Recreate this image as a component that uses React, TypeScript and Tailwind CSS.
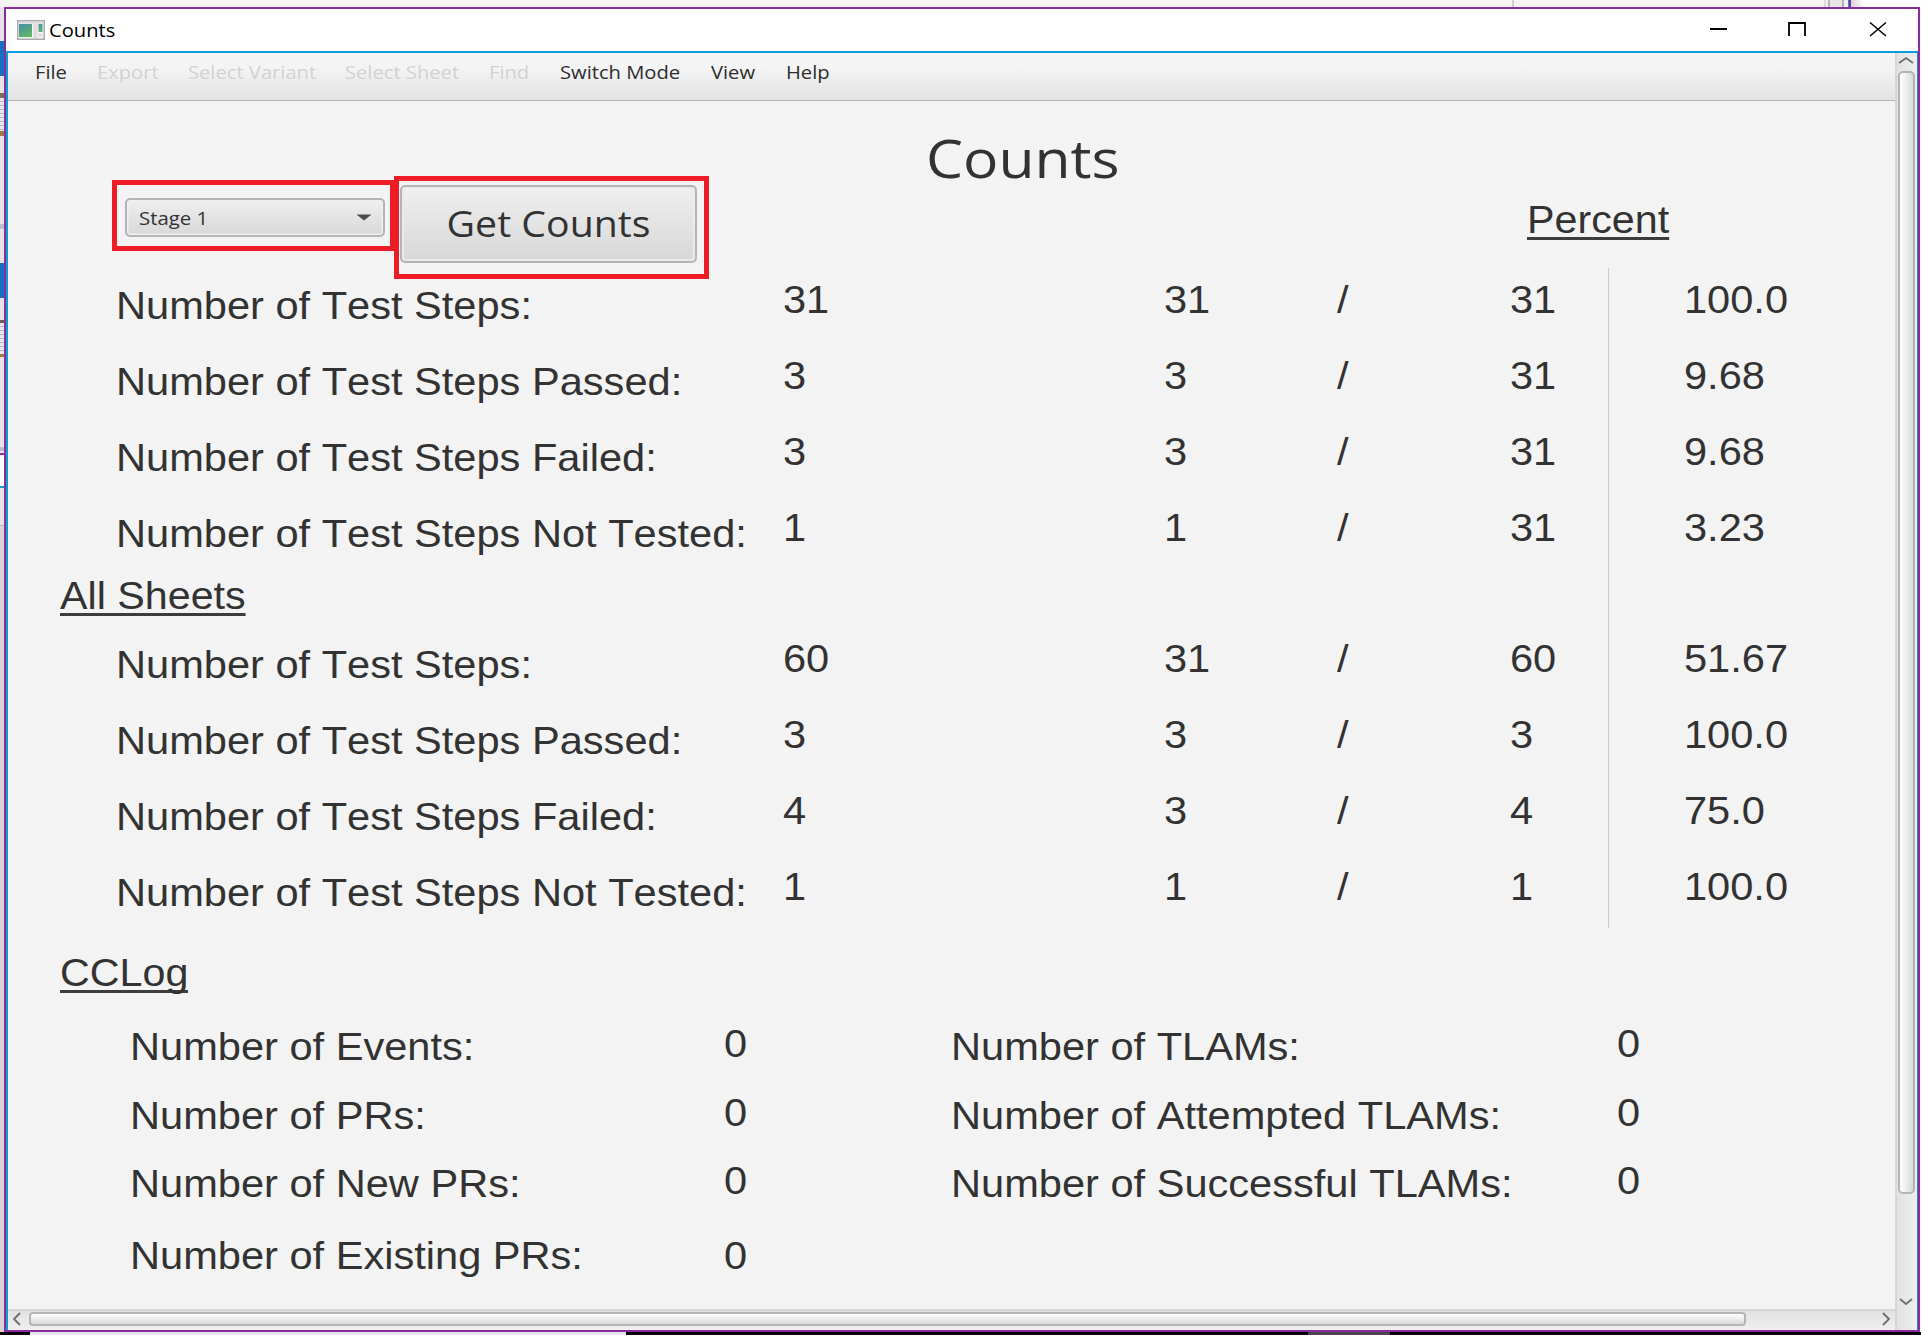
import React from "react";

const TEST_ROWS = [
  ["Number of Test Steps:", "31", "31", "31", "100.0"],
  ["Number of Test Steps Passed:", "3", "3", "31", "9.68"],
  ["Number of Test Steps Failed:", "3", "3", "31", "9.68"],
  ["Number of Test Steps Not Tested:", "1", "1", "31", "3.23"],
];

const ALL_ROWS = [
  ["Number of Test Steps:", "60", "31", "60", "51.67"],
  ["Number of Test Steps Passed:", "3", "3", "3", "100.0"],
  ["Number of Test Steps Failed:", "4", "3", "4", "75.0"],
  ["Number of Test Steps Not Tested:", "1", "1", "1", "100.0"],
];

const LOG_ROWS = [
  ["Number of Events:", "0", "Number of TLAMs:", "0"],
  ["Number of PRs:", "0", "Number of Attempted TLAMs:", "0"],
  ["Number of New PRs:", "0", "Number of Successful TLAMs:", "0"],
];

const MENU = [
  { label: "File", width: "w-[62px]", on: true },
  { label: "Export", width: "w-[91px]", on: false },
  { label: "Select Variant", width: "w-[157px]", on: false },
  { label: "Select Sheet", width: "w-[144px]", on: false },
  { label: "Find", width: "w-[71px]", on: false },
  { label: "Switch Mode", width: "w-[151px]", on: true },
  { label: "View", width: "w-[75px]", on: true },
  { label: "Help", width: "w-[60px]", on: true },
];

function Label({ children, className = "" }: { children: React.ReactNode; className?: string }) {
  return (
    <span
      className={`block h-[44px] origin-left scale-x-[1.08] whitespace-nowrap font-['Liberation_Sans',sans-serif] text-[38.5px] leading-[44px] [font-kerning:none] ${className}`}
    >
      {children}
    </span>
  );
}

function Heading({ children }: { children: React.ReactNode }) {
  return (
    <div className="h-[40px] w-fit origin-left scale-x-[1.085] whitespace-nowrap border-b-[3px] border-[#3c3c3c] font-['Liberation_Sans',sans-serif] text-[38px] leading-[40px]">
      {children}
    </div>
  );
}

function CountTable({ rows }: { rows: string[][] }) {
  return (
    <div>
      {rows.map((r) => (
        <div
          key={r[0]}
          className="grid h-[76.1px] grid-cols-[667px_381px_173px_172.500px_174px_auto] items-start pl-[108px]"
        >
          <Label className="mt-[6px]">{r[0]}</Label>
          <Label>{r[1]}</Label>
          <Label>{r[2]}</Label>
          <Label>/</Label>
          <Label>{r[3]}</Label>
          <Label>{r[4]}</Label>
        </div>
      ))}
    </div>
  );
}

function LogRow({ cells, last = false }: { cells: string[]; last?: boolean }) {
  return (
    <div className="grid h-[68.4px] grid-cols-[594px_227px_666px_auto] items-start pl-[122px]">
      <Label className={last ? "mt-[6px]" : "mt-[3px]"}>{cells[0]}</Label>
      <Label className={last ? "mt-[6px]" : ""}>{cells[1]}</Label>
      {cells[2] && <Label className="mt-[3px]">{cells[2]}</Label>}
      {cells[3] && <Label>{cells[3]}</Label>}
    </div>
  );
}

function Chevron({ d, className = "" }: { d: string; className?: string }) {
  return (
    <svg className={className} width="18" height="18" viewBox="0 0 18 18" fill="none" stroke="#6e6e6e" strokeWidth="1.8">
      <path d={d} />
    </svg>
  );
}

function TitleBar() {
  return (
    <div className="flex h-[42px] items-center bg-white pl-[11px]">
      <svg width="28" height="20" viewBox="0 0 28 20">
        <defs>
          <linearGradient id="pane" x1="0" y1="0" x2="0.5" y2="1">
            <stop offset="0" stopColor="#4a8ca8" />
            <stop offset="1" stopColor="#5fb56a" />
          </linearGradient>
        </defs>
        <rect x="0.75" y="0.75" width="26.5" height="18.5" fill="#f3f3f3" stroke="#a9abae" strokeWidth="1.5" />
        <rect x="1.5" y="1.5" width="25" height="2" fill="#d5d8dc" />
        <rect x="2" y="4" width="13" height="13" fill="url(#pane)" />
        <rect x="16.5" y="4" width="4" height="14" fill="#dcdcdc" />
        <rect x="21.5" y="4" width="4" height="8" fill="url(#pane)" />
        <rect x="21.5" y="13.500" width="4" height="3.500" fill="#dedede" />
      </svg>
      <span className="ml-[4px] origin-left scale-x-[1.12] font-['Open_Sans',sans-serif] text-[18px] leading-none text-black">
        Counts
      </span>
      <svg className="mr-[26px] ml-auto" width="200" height="42" viewBox="0 0 200 42" fill="none" stroke="#000">
        <path d="M18 20H35" strokeWidth="2" />
        <path d="M97 27V14H113V27" strokeWidth="1.8" />
        <path d="M178 13.500L194 27M194 13.500L178 27" strokeWidth="1.500" />
      </svg>
    </div>
  );
}

export default function App() {
  return (
    <div className="flex h-[1335px] w-[1921px] flex-col overflow-hidden bg-[#f3f3f3] text-[#323232]">
      <div className="flex h-[7px] shrink-0 justify-end">
        <div className="w-[312px] border-l-2 border-[#d0d0d0]" />
        <div className="flex w-[24px] border-l-2 border-[#dcdcdc] bg-[#f0f0f0]">
          <div className="ml-[2px] w-[16px] border-x-2 border-[#b4b4b4] bg-[#e6e6e6]" />
        </div>
        <div className="w-[3px] border-r-2 border-[#8c2ba0] bg-[#0b9bd5]" />
        <div className="w-[70px] bg-gradient-to-r from-[#d6d6d6] to-white to-20%" />
      </div>

      <div className="flex h-[1325px] shrink-0">
        <div className="flex w-[4px] shrink-0 flex-col bg-[#e4e4e6]">
          <div className="mt-[34px] h-[35px] bg-[#1670bd]" />
          <div className="mt-[17px] h-[5px] bg-[#7d6a58]" />
          <div className="h-[33px] bg-[repeating-linear-gradient(#e8e8ea_0_3px,#b4b9c6_3px_4px)]" />
          <div className="h-[5px] bg-[#a07840]" />
          <div className="mt-[88px] h-[5px] bg-[#b9bfd0]" />
          <div className="mt-[34px] h-[35px] bg-[#1670bd]" />
          <div className="mt-[22px] h-[3px] bg-[#6d5f55]" />
          <div className="h-[31px] bg-[repeating-linear-gradient(#e8e8ea_0_3px,#b4b9c6_3px_4px)]" />
          <div className="h-[3px] bg-[#a07840]" />
          <div className="mt-[90px] h-[4px] bg-[#b9bfd0]" />
          <div className="mt-[2px] h-[2px] bg-[#8c2ba0]" />
          <div className="h-[31px] bg-white" />
          <div className="h-[2px] bg-[#0b9bd5]" />
          <div className="mt-[37px] h-px bg-[#b5b5b5]" />
          <div className="grow bg-[#d9d6da]" />
        </div>

        <main className="flex w-[1916px] flex-col border-2 border-[#8c2ba0]">
          <TitleBar />
          <div className="flex h-[1279px] border-t-2 border-r border-l-2 border-[#0b9bd5] border-r-[#2f7fc0]">
            <div className="flex w-[1887px] flex-col">
              <nav className="flex h-[48px] shrink-0 border-b border-[#b4b4b4] bg-gradient-to-b from-[#f4f4f4] from-30% to-[#e3e3e3] pt-[7px] pl-[27px]">
                {MENU.map((m) => (
                  <div key={m.label} className={m.width}>
                    <span
                      className={`block origin-left scale-x-[1.12] whitespace-nowrap font-['Open_Sans',sans-serif] text-[18px] leading-[24px] ${m.on ? "text-[#2d2d2d]" : "text-[#d2d2d2]"}`}
                    >
                      {m.label}
                    </span>
                  </div>
                ))}
              </nav>

              <section className="h-[1208px] overflow-hidden">
                <div className="flex h-[177px]">
                  <div className="mt-[79px] ml-[104px] h-[71px] w-[283px] shrink-0 border-[5px] border-[#ee1c25] px-[8px] py-[13px]">
                    <div className="flex h-[39px] w-[260px] items-center justify-between rounded-[5px] border-2 border-[#b4b4b4] bg-gradient-to-b from-[#efefef] to-[#d8d8d8] pr-[11px] pl-[12px] shadow-[inset_0_0_0_1.500px_#f0f0f0]">
                      <span className="origin-left scale-x-[1.13] font-['Open_Sans',sans-serif] text-[18px] leading-none">
                        Stage 1
                      </span>
                      <svg width="16" height="7" viewBox="0 0 16 7" fill="#4b4b4b">
                        <path d="M0.500 0.500H15.500L8 6.500Z" />
                      </svg>
                    </div>
                  </div>
                  <div className="mt-[75px] -ml-px h-[103px] w-[315px] shrink-0 border-[5px] border-[#ee1c25] pt-[4px] pl-[1px]">
                    <div className="flex h-[78px] w-[297px] items-center justify-center rounded-[5px] border-2 border-[#b4b4b4] bg-gradient-to-b from-[#efefef] to-[#d8d8d8] shadow-[inset_0_0_0_2px_#ebebeb]">
                      <span className="scale-x-[1.09] whitespace-nowrap font-['Open_Sans',sans-serif] text-[36px] leading-none">
                        Get Counts
                      </span>
                    </div>
                  </div>
                  <h1 className="mt-[22px] ml-[217px] w-[601px] shrink-0 origin-left scale-x-[1.11] font-['Open_Sans',sans-serif] text-[53px] leading-[70px] font-normal">
                    Counts
                  </h1>
                  <div className="mt-[98.5px]">
                    <Heading>Percent</Heading>
                  </div>
                </div>

                <div className="relative">
                  <div className="absolute top-[-10px] left-[1600px] h-[660px] w-px bg-[#cbcbcb]" />
                  <div className="h-[298px]">
                    <CountTable rows={TEST_ROWS} />
                  </div>
                  <div className="h-[61px] pl-[52px]">
                    <Heading>All Sheets</Heading>
                  </div>
                  <CountTable rows={ALL_ROWS} />
                </div>
                <div className="h-[81px] pt-[12px] pl-[52px]">
                  <Heading>CCLog</Heading>
                </div>
                {LOG_ROWS.map((r) => (
                  <LogRow key={r[0]} cells={r} />
                ))}
                <LogRow cells={["Number of Existing PRs:", "0"]} last />
              </section>

              <div className="flex h-[21px] shrink-0 items-start border-t-2 border-[#d6d6d6] bg-gradient-to-b from-[#e2e2e2] to-[#efefef] pt-px">
                <Chevron d="M12 3L6 9L12 15" className="-mt-[2px]" />
                <div className="ml-[3px] h-[14px] w-[1717px] rounded-[4px] border-2 border-[#b4b4b4] bg-gradient-to-b from-white to-[#dadada]" />
                <Chevron d="M6 3L12 9L6 15" className="-mt-[2px] ml-auto" />
              </div>
            </div>

            <div className="flex w-[22px] flex-col items-start border-l-2 border-[#d6d6d6] bg-gradient-to-r from-[#e2e2e2] to-[#efefef] pl-px">
              <Chevron d="M1 10L8 5L15 10" className="shrink-0" />
              <div className="h-[1123px] w-[17px] shrink-0 rounded-[5px] border-2 border-[#b4b4b4] bg-gradient-to-r from-white to-[#dadada]" />
              <Chevron d="M2 6L8 11L14 6" className="mt-[99px] shrink-0" />
            </div>
          </div>
        </main>
      </div>

      <div className="flex h-[3px] shrink-0 bg-black">
        <div className="ml-[30px] w-[596px] bg-[#e6e6e8]" />
        <div className="ml-[682px] w-[82px] bg-[#4b464b]" />
      </div>
    </div>
  );
}
